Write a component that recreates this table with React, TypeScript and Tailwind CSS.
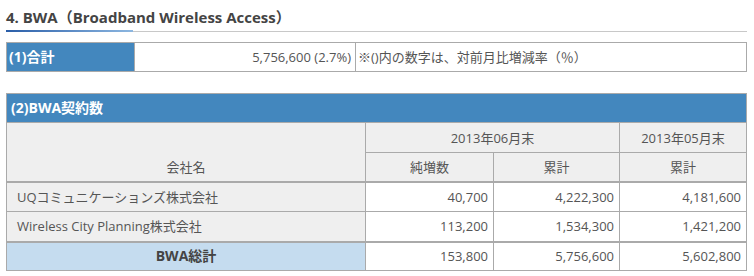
import React from 'react';

const font = { fontFamily: '"Open Sans", "Noto Sans CJK JP", sans-serif' };

const rows = [
  { name: 'UQコミュニケーションズ株式会社', net: '40,700', total: '4,222,300', prev: '4,181,600' },
  { name: 'Wireless City Planning株式会社', net: '113,200', total: '1,534,300', prev: '1,421,200' },
];

const cell = 'border border-[#aaa] p-0';

export default function App() {
  return (
    <div className="w-[754px] h-[276px] bg-white text-[#555] text-[13px] leading-[16px]" style={font}>
      <div className="pl-[6px] pr-[7px]">
        {/* 見出し */}
        <h2 className="pt-[8px] h-[30px] text-[15px] font-bold text-[#444] leading-[18px]">
          4. BWA（Broadband Wireless Access）
        </h2>
        <div className="flex h-[2px]">
          <div className="w-[127px] bg-gradient-to-r from-[#2a5ea8] to-[#8db7e0]" />
          <div className="flex-1 mt-[1px] h-[1px] bg-[#c8c8c8]" />
        </div>

        {/* (1)合計 */}
        <table className="mt-[10px] w-[741px] border-collapse table-fixed">
          <colgroup>
            <col className="w-[128px]" />
            <col className="w-[221px]" />
            <col />
          </colgroup>
          <tbody>
            <tr className="h-[29px]">
              <td className={`${cell} bg-[#4387be] text-white font-bold text-[14px] pl-[2px]`}>(1)合計</td>
              <td className={`${cell} text-right pr-[4px]`}>5,756,600 (2.7%)</td>
              <td className={`${cell} pl-[2px]`}>※()内の数字は、対前月比増減率（％）</td>
            </tr>
          </tbody>
        </table>

        {/* (2)BWA契約数 */}
        <table className="mt-[21px] w-[741px] border-collapse table-fixed">
          <colgroup>
            <col className="w-[359px]" />
            <col className="w-[128px]" />
            <col className="w-[126px]" />
            <col />
          </colgroup>
          <tbody>
            <tr className="h-[29px]">
              <td colSpan={4} className={`${cell} bg-[#4387be] text-white font-bold text-[14px] pl-[4px]`}>
                (2)BWA契約数
              </td>
            </tr>
            <tr className="h-[30px] bg-[#efefef]">
              <td className={`${cell} border-b-0`} />
              <td colSpan={2} className={`${cell} text-center`}>2013年06月末</td>
              <td className={`${cell} text-center`}>2013年05月末</td>
            </tr>
            <tr className="h-[29px] bg-[#efefef]">
              <td className={`${cell} border-t-0 border-b-2 text-center`}>会社名</td>
              <td className={`${cell} border-b-2 text-center`}>純増数</td>
              <td className={`${cell} border-b-2 text-center`}>累計</td>
              <td className={`${cell} border-b-2 text-center`}>累計</td>
            </tr>
            {rows.map((r) => (
              <tr key={r.name} className="h-[30px]">
                <td className={`${cell} bg-[#efefef] pl-[10px]`}>{r.name}</td>
                <td className={`${cell} text-right pr-[5px]`}>{r.net}</td>
                <td className={`${cell} text-right pr-[5px]`}>{r.total}</td>
                <td className={`${cell} text-right pr-[5px]`}>{r.prev}</td>
              </tr>
            ))}
            <tr className="h-[29px]">
              <td className={`${cell} border-t-2 bg-[#c5dcef] text-center font-bold text-[14px] text-[#444]`}>BWA総計</td>
              <td className={`${cell} border-t-2 text-right pr-[5px]`}>153,800</td>
              <td className={`${cell} border-t-2 text-right pr-[5px]`}>5,756,600</td>
              <td className={`${cell} border-t-2 text-right pr-[5px]`}>5,602,800</td>
            </tr>
          </tbody>
        </table>
      </div>
    </div>
  );
}
